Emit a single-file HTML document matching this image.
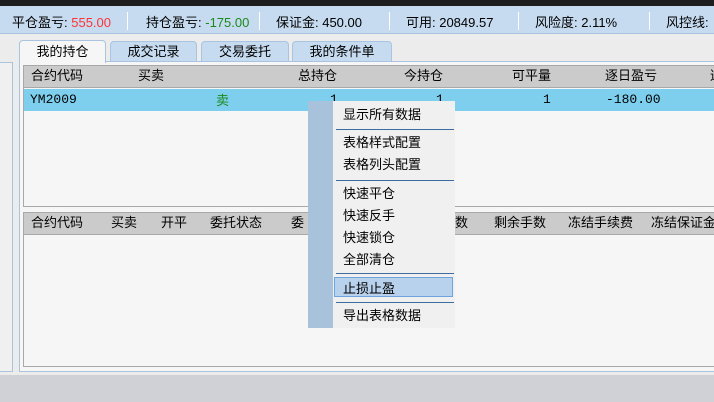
<!DOCTYPE html><html><head><meta charset="utf-8"><style>
*{margin:0;padding:0;box-sizing:border-box}
body{width:714px;height:402px;overflow:hidden;background:#ececec;font-family:"Liberation Sans","Noto Sans CJK SC",sans-serif;font-size:12px;color:#000;position:relative}
.a{position:absolute;white-space:nowrap}
.tab{position:absolute;border:1px solid #a9c4e0;border-bottom:none;border-radius:4px 4px 0 0;text-align:center;font-size:13px}
</style></head><body>
<div class="a" style="left:0;top:0;width:714px;height:6px;background:#1e1e1e"></div>
<div class="a" style="left:0;top:6px;width:714px;height:28px;background:#c6dbf0;border-bottom:1px solid #a9c4e0"></div>
<div class="a" style="top:12px;left:12px;font-size:13px">平仓盈亏: <span style="color:#f33">555.00</span></div>
<div class="a" style="top:12px;left:146px;font-size:13px">持仓盈亏: <span style="color:#1a8a1a">-175.00</span></div>
<div class="a" style="top:12px;left:276px;font-size:13px">保证金: 450.00</div>
<div class="a" style="top:12px;left:406px;font-size:13px">可用: 20849.57</div>
<div class="a" style="top:12px;left:535px;font-size:13px">风险度: 2.11%</div>
<div class="a" style="top:12px;left:666px;font-size:13px">风控线:</div>
<div class="a" style="left:127px;top:12px;width:1px;height:18px;background:#fff"></div>
<div class="a" style="left:259px;top:12px;width:1px;height:18px;background:#fff"></div>
<div class="a" style="left:389px;top:12px;width:1px;height:18px;background:#fff"></div>
<div class="a" style="left:518px;top:12px;width:1px;height:18px;background:#fff"></div>
<div class="a" style="left:649px;top:12px;width:1px;height:18px;background:#fff"></div>
<div class="a" style="left:0;top:62px;width:13px;height:310px;background:#f0f0f0;border:1px solid #a9c4e0;border-left:none"></div>
<div class="a" style="left:19px;top:61px;width:700px;height:311px;background:#f6f6f6;border:1px solid #a9c4e0"></div>
<div class="tab" style="left:19px;top:40px;width:87px;height:23px;background:#f6f6f6;line-height:21px">我的持仓</div>
<div class="tab" style="left:110px;top:41px;width:87px;height:20px;background:#c6dbf0;line-height:19px">成交记录</div>
<div class="tab" style="left:201px;top:41px;width:88px;height:20px;background:#c6dbf0;line-height:19px">交易委托</div>
<div class="tab" style="left:292px;top:41px;width:100px;height:20px;background:#c6dbf0;line-height:19px">我的条件单</div>
<div class="a" style="left:23px;top:65px;width:700px;height:142px;border:1px solid #a8a8a8;background:#f6f6f6"></div>
<div class="a" style="left:24px;top:66px;width:700px;height:22px;background:#cbcbcb;border-bottom:1px solid #a8a8a8;font-size:13px;line-height:20px">
<span class="a" style="left:7px">合约代码</span><span class="a" style="left:114px">买卖</span><span class="a" style="left:274px">总持仓</span><span class="a" style="left:380px">今持仓</span><span class="a" style="left:488px">可平量</span><span class="a" style="left:581px">逐日盈亏</span><span class="a" style="left:686px">逐</span></div>
<div class="a" style="left:24px;top:89px;width:700px;height:22px;background:#7ecfee;font-family:'Liberation Mono',monospace;font-size:13px;line-height:22px">
<span class="a" style="left:6px">YM2009</span><span class="a" style="left:192px;color:#1a8a1a;font-family:'Noto Sans CJK SC';font-size:13px">卖</span><span class="a" style="left:306px">1</span><span class="a" style="left:412px">1</span><span class="a" style="left:519px">1</span><span class="a" style="left:582px">-180.00</span></div>
<div class="a" style="left:23px;top:212px;width:700px;height:155px;border:1px solid #a8a8a8;background:#f6f6f6"></div>
<div class="a" style="left:24px;top:213px;width:700px;height:22px;background:#cbcbcb;border-bottom:1px solid #a8a8a8;font-size:13px;line-height:20px">
<span class="a" style="left:7px">合约代码</span><span class="a" style="left:87px">买卖</span><span class="a" style="left:137px">开平</span><span class="a" style="left:186px">委托状态</span><span class="a" style="left:267px">委</span><span class="a" style="left:418px">手数</span><span class="a" style="left:470px">剩余手数</span><span class="a" style="left:544px">冻结手续费</span><span class="a" style="left:627px">冻结保证金</span></div>
<div class="a" style="left:0;top:375px;width:714px;height:27px;background:#d0d1d6"></div>
<div class="a" style="left:308px;top:101px;width:147px;height:227px;background:#f0f0f0;font-size:13px">
<div class="a" style="left:0;top:0;width:25px;height:227px;background:#a8c2dc"></div>
<span class="a" style="left:35px;top:3px">显示所有数据</span>
<div class="a" style="left:28px;top:28px;width:118px;height:1px;background:#3d6c9e"></div>
<span class="a" style="left:35px;top:31px">表格样式配置</span>
<span class="a" style="left:35px;top:53px">表格列头配置</span>
<div class="a" style="left:28px;top:79px;width:118px;height:1px;background:#3d6c9e"></div>
<span class="a" style="left:35px;top:82px">快速平仓</span>
<span class="a" style="left:35px;top:104px">快速反手</span>
<span class="a" style="left:35px;top:126px">快速锁仓</span>
<span class="a" style="left:35px;top:148px">全部清仓</span>
<div class="a" style="left:28px;top:172px;width:118px;height:1px;background:#3d6c9e"></div>
<div class="a" style="left:26px;top:176px;width:119px;height:20px;background:#b8d1ec;border:1px solid #6fa3de"></div>
<span class="a" style="left:35px;top:177px">止损止盈</span>
<div class="a" style="left:28px;top:201px;width:118px;height:1px;background:#3d6c9e"></div>
<span class="a" style="left:35px;top:204px">导出表格数据</span>
</div>
</body></html>
